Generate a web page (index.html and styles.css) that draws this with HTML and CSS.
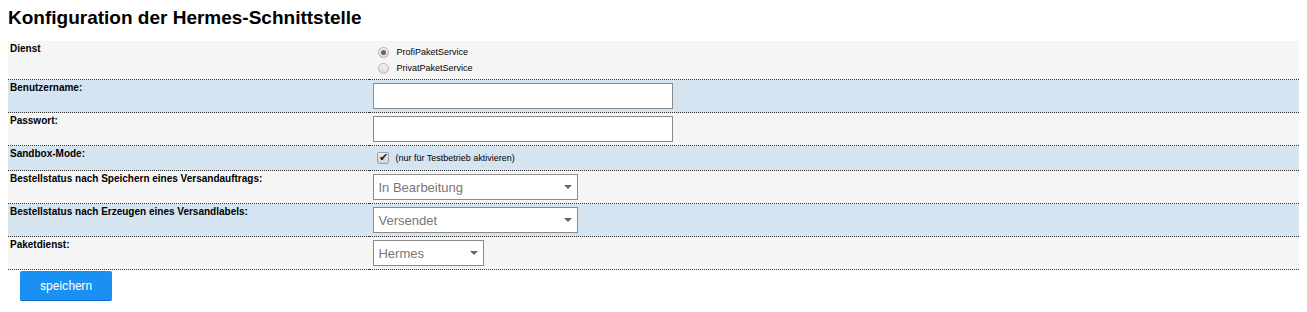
FILE: index.html
```html
<!DOCTYPE html>
<html>
  <head>
    <title>Hermes-Schnittstelle</title>
    <link rel="stylesheet" href="styles.css">
  </head>
  <body>
    <h1>Konfiguration der Hermes-Schnittstelle</h1>

    <form id="hermes-form">
      <table class="config">
        <tr class="odd">
          <td class="label">Dienst</td>
          <td class="field">
            <label class="option"><input type="radio" name="service" value="pps" checked /> ProfiPaketService</label>
            <label class="option"><input type="radio" name="service" value="prips" /> PrivatPaketService</label>
          </td>
        </tr>
        <tr class="even">
          <td class="label">Benutzername:</td>
          <td class="field"><input type="text" class="text" /></td>
        </tr>
        <tr class="odd">
          <td class="label">Passwort:</td>
          <td class="field"><input type="password" class="text" /></td>
        </tr>
        <tr class="even">
          <td class="label">Sandbox-Mode:</td>
          <td class="field">
            <label class="option check"><input type="checkbox" checked /> (nur für Testbetrieb aktivieren)</label>
          </td>
        </tr>
        <tr class="odd">
          <td class="label">Bestellstatus nach Speichern eines Versandauftrags:</td>
          <td class="field">
            <div class="select wide">
              <select><option>In Bearbeitung</option><option>Versendet</option></select>
            </div>
          </td>
        </tr>
        <tr class="even">
          <td class="label">Bestellstatus nach Erzeugen eines Versandlabels:</td>
          <td class="field">
            <div class="select wide">
              <select><option>Versendet</option><option>In Bearbeitung</option></select>
            </div>
          </td>
        </tr>
        <tr class="odd">
          <td class="label">Paketdienst:</td>
          <td class="field">
            <div class="select narrow">
              <select><option>Hermes</option></select>
            </div>
          </td>
        </tr>
      </table>

      <button type="submit" class="save">speichern</button>
    </form>
  </body>
</html>
```

FILE: styles.css
```css
body {
  margin: 8px;
  font-family: "Liberation Sans", Arial, sans-serif;
  color: #000;
  background: #fff;
}

h1 {
  font-size: 19px;
  font-weight: bold;
  margin: 0 0 13px 0;
  line-height: 20px;
}

.config {
  width: 100%;
  border-collapse: collapse;
}

.config td {
  border-bottom: 1px dotted #333;
  vertical-align: top;
}

.odd {
  background-color: #f5f5f5;
}

.even {
  background-color: #d5e4f1;
}

.label {
  width: 28%;
  padding: 2px 2px;
  font-size: 10px;
  font-weight: bold;
  line-height: 12px;
}

.field {
  padding: 3px 3px 3px 4px;
  font-size: 9px;
}

.option {
  display: flex;
  align-items: center;
  gap: 7px;
  height: 16px;
  padding-left: 5px;
}

.option.check {
  height: 18px;
  padding-left: 4px;
  gap: 6px;
}

input[type="radio"] {
  appearance: none;
  margin: 0;
  width: 11px;
  height: 11px;
  border: 1px solid #b5b5b5;
  border-radius: 50%;
  background: linear-gradient(#f4f4f4, #dcdcdc);
  position: relative;
}

input[type="radio"]:checked::after {
  content: "";
  position: absolute;
  left: 2px;
  top: 2px;
  width: 5px;
  height: 5px;
  border-radius: 50%;
  background: #666;
}

input[type="checkbox"] {
  appearance: none;
  margin: 0;
  width: 12px;
  height: 12px;
  border: 1px solid #a0a0a0;
  border-radius: 2px;
  background: linear-gradient(#eeeeee, #d0d0d0);
  position: relative;
}

input[type="checkbox"]:checked::after {
  content: "\2714";
  position: absolute;
  left: 1px;
  top: -2px;
  font-size: 11px;
  color: #222;
}

input.text {
  display: block;
  width: 300px;
  height: 26px;
  margin: 0;
  border: 1px solid #8a8a8a;
  background: #fff;
  box-sizing: border-box;
}

.select {
  position: relative;
  height: 26px;
}

.select.wide {
  width: 205px;
}

.select.narrow {
  width: 111px;
}

.select select {
  appearance: none;
  width: 100%;
  height: 26px;
  margin: 0;
  padding: 0 4px;
  border: 1px solid #8a8a8a;
  border-radius: 0;
  background: #fff;
  color: #777;
  font-family: "Liberation Sans", Arial, sans-serif;
  font-size: 13px;
  box-sizing: border-box;
}

.select::after {
  content: "";
  position: absolute;
  right: 6px;
  top: 11px;
  border-left: 4px solid transparent;
  border-right: 4px solid transparent;
  border-top: 4px solid #666;
  pointer-events: none;
}

.save {
  display: block;
  margin: 1px 0 0 12px;
  width: 92px;
  height: 30px;
  border: none;
  border-bottom: 1px solid #0d6fc4;
  border-radius: 2px;
  background-color: #1a90f2;
  color: #fff;
  font-family: Roboto, sans-serif;
  font-size: 12px;
  cursor: pointer;
}
```
